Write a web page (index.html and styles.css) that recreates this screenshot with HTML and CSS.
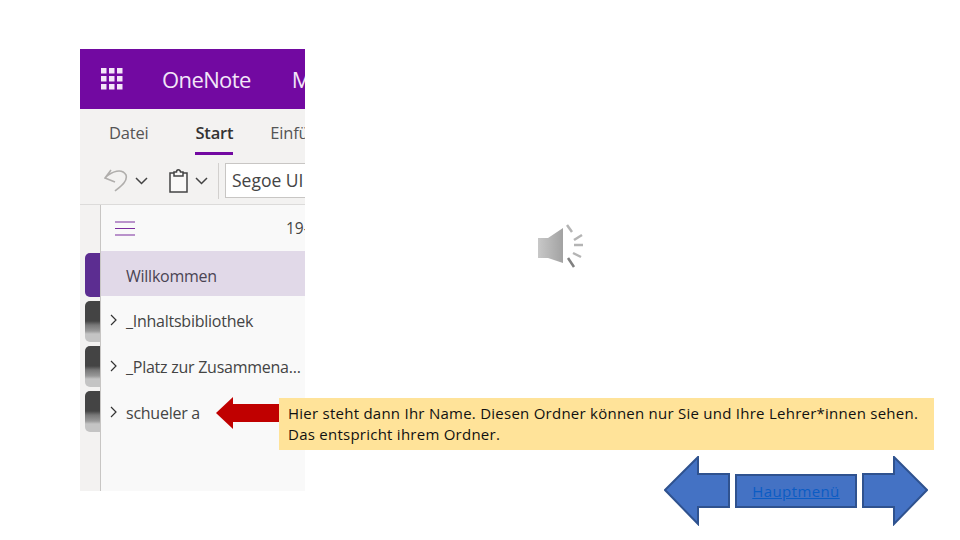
FILE: index.html
```html
<!DOCTYPE html>
<html lang="de">

<head>
    <meta charset="UTF-8" />
    <title>OneNote - Hauptmenü</title>
    <link rel="stylesheet" href="styles.css">
</head>

<body>
    <div class="slide">
        <div class="shot">
            <div class="topbar">
                <svg class="waffle" width="22" height="22" viewBox="0 0 22 22" fill="#f3e6f8">
                    <rect x="0" y="0" width="5.5" height="5.5" />
                    <rect x="8" y="0" width="5.5" height="5.5" />
                    <rect x="16" y="0" width="5.5" height="5.5" />
                    <rect x="0" y="8" width="5.5" height="5.5" />
                    <rect x="8" y="8" width="5.5" height="5.5" />
                    <rect x="16" y="8" width="5.5" height="5.5" />
                    <rect x="0" y="16" width="5.5" height="5.5" />
                    <rect x="8" y="16" width="5.5" height="5.5" />
                    <rect x="16" y="16" width="5.5" height="5.5" />
                </svg>
                <span class="app-name">OneNote</span>
                <span class="divider"></span>
                <span class="doc-name">M</span>
            </div>
            <div class="ribbon">
                <div class="tabs">
                    <span class="tab">Datei</span>
                    <span class="tab active">Start</span>
                    <span class="tab insert">Einfü</span>
                </div>
                <div class="tools">
                    <svg width="24" height="28" viewBox="0 0 24 28" fill="none" stroke="#b0aeac" stroke-width="1.6">
                        <path d="M7 3 1 11l10 4M1 11C8 4 18 1 22 8c2 6-5 11-11 16" />
                    </svg>
                    <svg class="chev" width="13" height="8" viewBox="0 0 13 8" fill="none" stroke="#444" stroke-width="1.5">
                        <path d="M1 1l5.5 5.5L12 1" />
                    </svg>
                    <svg class="clip" width="19" height="24" viewBox="0 0 19 24" fill="#faf9f8" stroke="#444" stroke-width="1.5">
                        <path d="M5 4H1v19h17V4h-4" />
                        <path d="M5 7V3h2.500c0-3 3.500-3 4 0H14v4z" />
                    </svg>
                    <svg class="chev" width="13" height="8" viewBox="0 0 13 8" fill="none" stroke="#444" stroke-width="1.5">
                        <path d="M1 1l5.5 5.5L12 1" />
                    </svg>
                    <span class="tool-sep"></span>
                    <span class="font-box">Segoe UI</span>
                </div>
            </div>
            <div class="main">
                <div class="rail">
                    <span class="sec-tab current"></span>
                    <span class="sec-tab"></span>
                    <span class="sec-tab"></span>
                    <span class="sec-tab"></span>
                </div>
                <div class="nav">
                    <div class="nav-head">
                        <svg width="20" height="15" viewBox="0 0 20 15" stroke="#7b2d9e" stroke-width="1.2">
                            <path d="M0 1h20M0 7.500h20M0 14h20" />
                        </svg>
                        <span class="page-date">19-</span>
                    </div>
                    <div class="nav-item selected">Willkommen</div>
                    <div class="nav-item">
                        <svg class="caret" width="7" height="12" viewBox="0 0 7 12" fill="none" stroke="#333" stroke-width="1.2"><path d="M1 1l5 5-5 5" /></svg>
                        _Inhaltsbibliothek
                    </div>
                    <div class="nav-item">
                        <svg class="caret" width="7" height="12" viewBox="0 0 7 12" fill="none" stroke="#333" stroke-width="1.2"><path d="M1 1l5 5-5 5" /></svg>
                        _Platz zur Zusammena...
                    </div>
                    <div class="nav-item">
                        <svg class="caret" width="7" height="12" viewBox="0 0 7 12" fill="none" stroke="#333" stroke-width="1.2"><path d="M1 1l5 5-5 5" /></svg>
                        schueler a
                    </div>
                </div>
            </div>
        </div>

        <svg class="speaker" width="48" height="46" viewBox="0 0 48 46">
            <defs>
                <linearGradient id="cone" x1="0" x2="1" y1="0" y2="0">
                    <stop offset="0" stop-color="#c8c8c8" />
                    <stop offset="1" stop-color="#a2a2a2" />
                </linearGradient>
            </defs>
            <path d="M0 14h10L25 4v35L10 34H0z" fill="url(#cone)" />
            <g fill="none" stroke="#b4b4b4" stroke-width="2.5">
                <path d="M29 1l5 7" />
                <path d="M36 16l8-5" />
                <path d="M36 21h9" />
                <path d="M35 29l8 4" />
                <path d="M30 34l6 9" stroke="#808080" />
            </g>
        </svg>

        <svg class="red-arrow" width="64" height="34" viewBox="0 0 64 34">
            <path d="M0 17 17 1v7h47v18H17v7z" fill="#c00000" />
        </svg>

        <div class="note">Hier steht dann Ihr Name. Diesen Ordner können nur Sie und Ihre Lehrer*innen sehen.<br>Das entspricht ihrem Ordner.</div>

        <svg class="nav-arrow prev" width="66" height="70" viewBox="0 0 66 70">
            <path d="M1 34 34 1v17h31v33H34v17z" fill="#4472c4" stroke="#2f528f" stroke-width="2" />
        </svg>
        <a class="menu-btn" href="#">Hauptmenü</a>
        <svg class="nav-arrow next" width="66" height="70" viewBox="0 0 66 70">
            <path d="M65 34 32 1v17H1v33h31v17z" fill="#4472c4" stroke="#2f528f" stroke-width="2" />
        </svg>
    </div>
</body>

</html>
```

FILE: styles.css
```css
* {
    box-sizing: border-box;
    margin: 0;
    padding: 0;
}

body {
    background: #fff;
    font-family: 'Open Sans', sans-serif;
    overflow: hidden;
}

.slide {
    position: relative;
    width: 960px;
    height: 540px;
    overflow: hidden;
}

/* screenshot on the slide */
.shot {
    position: absolute;
    left: 80px;
    top: 49px;
    width: 225px;
    height: 442px;
    display: flex;
    flex-direction: column;
    overflow: hidden;
    background: #f9f9f9;
}

.topbar {
    height: 60px;
    flex: none;
    display: flex;
    align-items: center;
    padding-left: 21px;
    background: #7209a1;
    color: #f3e6f8;
    white-space: nowrap;
}

.waffle {
    flex: none;
}

.app-name {
    font-size: 22px;
    margin-left: 39px;
    letter-spacing: -0.6px;
}

.divider {
    width: 1px;
    height: 26px;
    margin: 0 19px 2px 22px;
    background: #a765c6;
}

.doc-name {
    font-size: 22px;
}

.ribbon {
    height: 96px;
    flex: none;
    background: #f3f2f1;
    border-bottom: 1px solid #dcdbda;
    overflow: hidden;
}

.tabs {
    display: flex;
    gap: 47px;
    padding: 12px 0 0 29px;
    height: 47px;
    white-space: nowrap;
}

.tab {
    font-size: 16.5px;
    letter-spacing: -0.2px;
    color: #555;
    height: 34px;
}

.tab.active {
    font-weight: 600;
    color: #333;
    border-bottom: 3px solid #7209a1;
}

.tab.insert {
    margin-left: -10px;
}

.tools {
    display: flex;
    align-items: center;
    padding-left: 24px;
    height: 49px;
}

.tools svg {
    flex: none;
}

.tools .chev {
    margin-left: 7px;
}

.tools .clip {
    margin-left: 21px;
}

.tool-sep {
    width: 1px;
    height: 36px;
    flex: none;
    margin: 0 6px 0 10px;
    background: #d2d0ce;
}

.font-box {
    width: 100px;
    height: 35px;
    flex: none;
    padding-left: 6px;
    font-size: 17.5px;
    line-height: 33px;
    color: #444;
    background: #fff;
    border: 1px solid #c8c6c4;
    white-space: nowrap;
}

.main {
    flex: 1;
    display: flex;
    min-height: 0;
}

.rail {
    width: 21px;
    flex: none;
    padding: 48px 0 0 5px;
    display: flex;
    flex-direction: column;
    gap: 4px;
    background: #f3f2f1;
    border-right: 1px solid #c8c6c4;
}

.sec-tab {
    height: 41px;
    flex: none;
    border-radius: 5px 0 0 5px;
    background: linear-gradient(#444 0 20px, #777 24px, #999 30px, #c4c4c4 33px);
}

.sec-tab.current {
    height: 44px;
    background: #5c2d91;
}

.nav {
    flex: 1;
    min-width: 0;
    white-space: nowrap;
}

.nav-head {
    height: 46px;
    display: flex;
    align-items: center;
    padding-left: 14px;
}

.nav-head svg {
    flex: none;
}

.page-date {
    margin-left: 151px;
    font-size: 15.5px;
    color: #444;
}

.nav-item {
    position: relative;
    height: 46px;
    padding-left: 25px;
    font-size: 16px;
    letter-spacing: -0.25px;
    line-height: 50px;
    color: #444;
}

.nav-item.selected {
    height: 45px;
    background: #e1d9e8;
    color: #4a4453;
}

.caret {
    position: absolute;
    left: 9px;
    top: 18px;
}

/* slide shapes */
.speaker {
    position: absolute;
    left: 538px;
    top: 224px;
    filter: blur(0.5px);
}

.red-arrow {
    position: absolute;
    left: 216px;
    top: 396px;
}

.note {
    position: absolute;
    left: 279px;
    top: 398px;
    width: 655px;
    height: 52px;
    padding: 5px 9px;
    background: #ffe399;
    font-size: 15px;
    letter-spacing: 0.25px;
    line-height: 21px;
    color: #111;
    white-space: nowrap;
}

.nav-arrow {
    position: absolute;
    top: 456px;
}

.prev {
    left: 664px;
}

.next {
    left: 862px;
}

.menu-btn {
    position: absolute;
    left: 735px;
    top: 474px;
    width: 122px;
    height: 34px;
    background: #4472c4;
    border: 2px solid #2f528f;
    color: #0b5cc4;
    font-size: 15px;
    letter-spacing: 0.4px;
    line-height: 30px;
    text-align: center;
}
```
